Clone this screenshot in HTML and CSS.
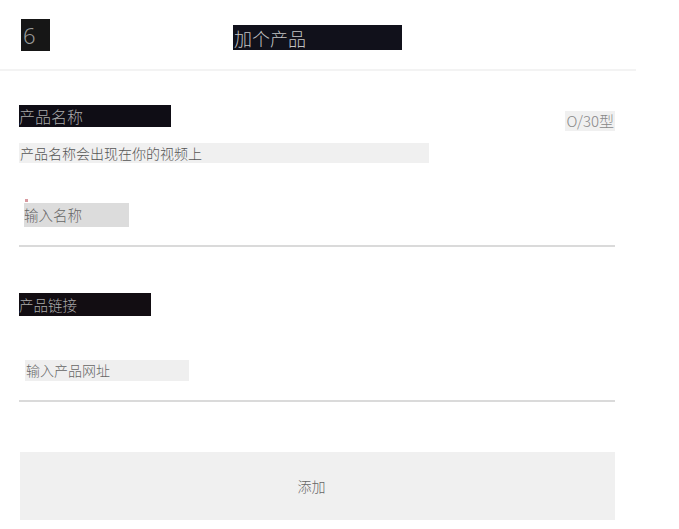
FILE: index.html
```html
<!DOCTYPE html>
<html lang="zh">
<head>
<meta charset="utf-8">
<title>加个产品</title>
<link rel="stylesheet" href="styles.css">
</head>
<body>
<div class="app">
  <header class="topbar">
    <div class="back">6</div>
    <div class="title">加个产品</div>
  </header>
  <main class="form">
    <section class="field field-name">
      <div class="label-row">
        <div class="label label-name">产品名称</div>
        <div class="counter">O/30型</div>
      </div>
      <div class="hint">产品名称会出现在你的视频上</div>
      <div class="input input-name">
        <span class="dot"></span>
        <span class="placeholder ph-name">输入名称</span>
      </div>
    </section>
    <section class="field field-link">
      <div class="label label-link">产品链接</div>
      <div class="input input-link">
        <span class="placeholder ph-link">输入产品网址</span>
      </div>
    </section>
    <button class="add">添加</button>
  </main>
</div>
</body>
</html>
```
FILE: styles.css
```css
* { box-sizing: border-box; }
html, body { margin: 0; padding: 0; background: #fff; }
body {
  font-family: "Noto Sans CJK SC", "Noto Sans", sans-serif;
  font-weight: 300;
  color: #555;
}
.app { width: 636px; }
.topbar {
  height: 71px;
  border-bottom: 2px solid #f3f3f3;
  display: flex;
  align-items: flex-start;
}
.back {
  margin: 19px 0 0 21px;
  width: 29px;
  height: 32px;
  background: #161616;
  color: #9a9a9a;
  font-family: "Noto Sans", sans-serif;
  font-size: 22px;
  line-height: 32px;
  padding-left: 2px;
}
.title {
  margin: 25px 0 0 183px;
  width: 169px;
  height: 25px;
  background: #11111b;
  color: #c4c4c4;
  font-size: 18px;
  line-height: 27px;
  padding-left: 1px;
}
.form { padding: 0 21px 0 19px; }
.field-name { padding-top: 34px; }
.label-row { display: flex; justify-content: space-between; align-items: flex-start; }
.label {
  background: #0f0d15;
  color: #aaa;
  font-size: 16px;
  line-height: 22px;
  height: 22px;
}
.label-name { width: 152px; }
.counter {
  margin-top: 6px;
  background: #f0f0f0;
  color: #888;
  font-size: 15px;
  line-height: 20px;
  height: 20px;
  padding: 0 1px;
}
.hint {
  margin-top: 16px;
  width: 410px;
  height: 20px;
  background: #f0f0f0;
  color: #555;
  font-size: 14px;
  line-height: 20px;
  padding-left: 1px;
  margin-top: 12px;
}
.input {
  border-bottom: 2px solid #dadada;
  position: relative;
}
.input-name { height: 84px; padding-top: 40px; }
.dot {
  position: absolute;
  left: 6px;
  top: 36px;
  width: 3px;
  height: 3px;
  background: #d89aa0;
}
.placeholder {
  display: block;
  font-size: 14.5px;
  color: #666;
}
.ph-name {
  margin-left: 5px;
  width: 105px;
  height: 24px;
  line-height: 24px;
  background: #dcdcdc;
}
.field-link { padding-top: 46px; }
.label-link { width: 132px; height: 23px; line-height: 23px; background: #120d12; font-size: 14.5px; }
.input-link { height: 86px; padding-top: 44px; }
.ph-link {
  margin-left: 6px;
  width: 164px;
  height: 21px;
  line-height: 21px;
  background: #efefef;
  padding-left: 1px;
  font-size: 14px;
}
.add {
  display: block;
  margin: 50px 0 0 1px;
  width: 595px;
  height: 68px;
  border: none;
  background: #f0f0f0;
  color: #666;
  font-family: "Noto Sans CJK SC", "Noto Sans", sans-serif;
  font-weight: 300;
  font-size: 14px;
  padding: 0 12px 0 0;
}
```
